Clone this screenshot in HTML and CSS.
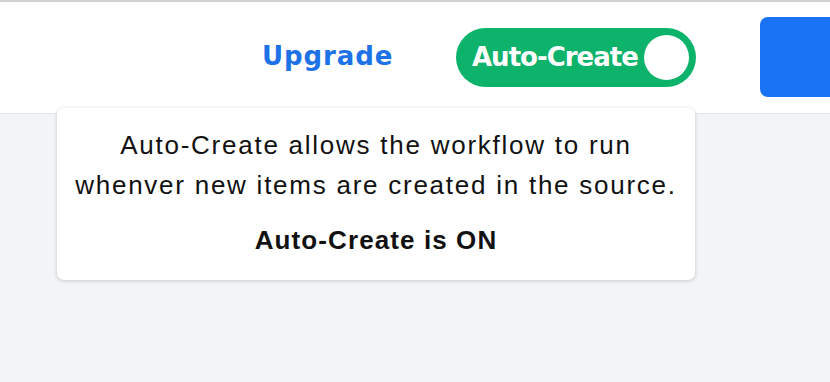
FILE: index.html
```html
<!DOCTYPE html>
<html>
<head>
<meta charset="utf-8">
<link rel="stylesheet" href="styles.css">
</head>
<body>
<div class="page">
  <header class="header">
    <a class="upgrade">Upgrade</a>
    <div class="toggle">
      <span class="toggle-label">Auto-Create</span>
      <span class="knob"></span>
    </div>
    <div class="primary"></div>
  </header>
  <div class="tooltip">
    <p class="tip-text">Auto-Create allows the workflow to run<br>whenver new items are created in the source.</p>
    <p class="tip-status">Auto-Create is ON</p>
  </div>
</div>
</body>
</html>
```
FILE: styles.css
```css
html, body {
  margin: 0;
  padding: 0;
}
body {
  width: 830px;
  height: 382px;
  overflow: hidden;
  background: #f3f4f6;
  font-family: "DejaVu Sans", "Liberation Sans", sans-serif;
}
.page {
  position: relative;
  height: 382px;
  border-top: 2px solid #cfcfcf;
  box-sizing: border-box;
}
.header {
  height: 112px;
  background: #ffffff;
  border-bottom: 1px solid #e4e5e8;
  box-sizing: border-box;
  display: flex;
  align-items: center;
  padding-left: 262px;
  overflow: hidden;
  white-space: nowrap;
}
.upgrade {
  flex: 0 0 130px;
  color: #1d72e8;
  font-weight: 700;
  font-size: 26px;
  letter-spacing: 0.9px;
  margin-top: -4px;
  margin-right: 64px;
  overflow: hidden;
}
.toggle {
  flex: 0 0 240px;
  display: flex;
  align-items: center;
  justify-content: space-between;
  height: 59px;
  box-sizing: border-box;
  padding: 0 7px 0 16px;
  border-radius: 30px;
  background: #0db26b;
  margin-right: 64px;
}
.toggle-label {
  color: #fff;
  font-weight: 700;
  font-size: 26px;
  letter-spacing: -1px;
  margin-top: -2px;
}
.knob {
  width: 45px;
  height: 45px;
  border-radius: 50%;
  background: #fff;
}
.primary {
  flex: 0 0 120px;
  height: 80px;
  border-radius: 8px;
  background: #1a73f5;
  margin-top: -2px;
}
.tooltip {
  position: absolute;
  left: 57px;
  top: 106px;
  width: 638px;
  height: 172px;
  box-sizing: border-box;
  background: #fff;
  border-radius: 7px;
  box-shadow: 0 1px 4px rgba(0, 0, 0, 0.18);
  text-align: center;
  padding-top: 17px;
  color: #111;
  font-family: "Liberation Sans", sans-serif;
}
.tip-text {
  margin: 0;
  font-size: 26px;
  line-height: 40px;
  font-weight: 400;
  letter-spacing: 1.75px;
}
.tip-status {
  margin: 20px 0 0;
  font-size: 26px;
  line-height: 30px;
  font-weight: 700;
  letter-spacing: 1.1px;
}
```
